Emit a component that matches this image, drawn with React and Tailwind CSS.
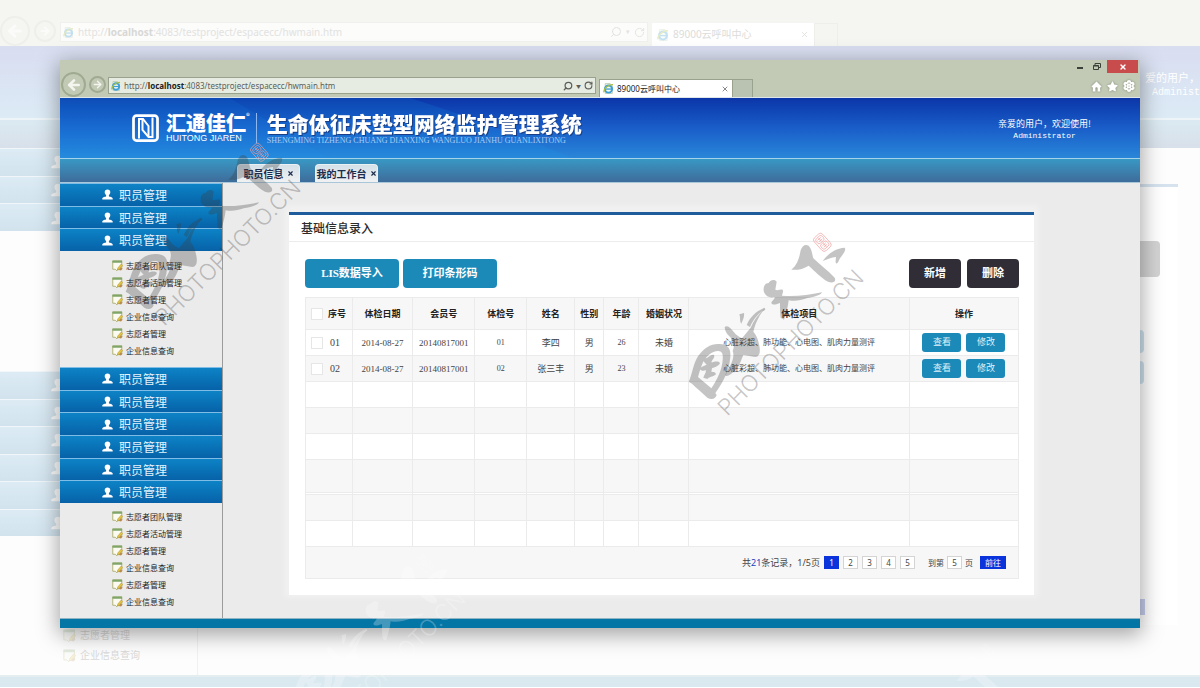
import React from "react";
import { Settings, Search, RotateCw, ArrowLeft, ArrowRight, X } from "lucide-react";
import { FaStar } from "react-icons/fa";

const SUB_ITEMS = ["志愿者团队管理", "志愿者活动管理", "志愿者管理", "企业信息查询", "志愿者管理", "企业信息查询"];

const COLUMNS = [
  { label: "序号", width: "w-[47px]" },
  { label: "体检日期", width: "w-[60px]" },
  { label: "会员号", width: "w-[62px]" },
  { label: "体检号", width: "w-[52px]" },
  { label: "姓名", width: "w-[48px]" },
  { label: "性别", width: "w-[29px]" },
  { label: "年龄", width: "w-[35px]" },
  { label: "婚姻状况", width: "w-[50px]" },
  { label: "体检项目", width: "w-[220px]" },
  { label: "操作", width: "w-[109px]" },
];

const PEOPLE = [
  { id: "01", date: "2014-08-27", member: "20140817001", exam: "01", name: "李四", sex: "男", age: "26", marital: "未婚" },
  { id: "02", date: "2014-08-27", member: "20140817001", exam: "02", name: "张三丰", sex: "男", age: "23", marital: "未婚" },
];

const EMPTY_ROWS = [
  "h-[26px] bg-white",
  "h-[26px] bg-[#f7f7f7]",
  "h-[26px] bg-white",
  "h-[33px] bg-[#f7f7f7]",
  "h-[2px] bg-white",
  "h-[26px] bg-[#f7f7f7]",
  "h-[26px] bg-white",
];

function BrowserIcon({ className }) {
  return (
    <svg viewBox="0 0 20 20" className={className} aria-hidden="true">
      <path d="M4 1h9l4 4v14H4z" fill="#f4f8ee" stroke="#9db58c" strokeWidth="1" />
      <circle cx="10" cy="11" r="6.500" fill="none" stroke="#3f9fd8" strokeWidth="3.600" />
      <path d="M5 11h11" stroke="#3f9fd8" strokeWidth="2.400" />
      <path d="M2 17C0 12 9 2 18 3" fill="none" stroke="#a9bf3c" strokeWidth="2.400" />
    </svg>
  );
}

function PersonIcon({ className }) {
  return (
    <svg viewBox="0 0 22 22" className={className} fill="currentColor" aria-hidden="true">
      <path d="M11 1c3.600 0 5.600 2.300 5.600 5.400 0 2.500-1.200 4.300-2.800 5.600v2.400c.6 1.200 7.600 1.600 7.600 4.600v2H.6v-2c0-3 7-3.400 7.600-4.600V12C6.600 10.700 5.400 8.900 5.400 6.400 5.400 3.300 7.400 1 11 1z" />
    </svg>
  );
}

function NoteIcon({ className }) {
  return (
    <svg viewBox="0 0 22 22" className={className} aria-hidden="true">
      <path d="M1.500 2v16.500h5l3 3 2.500-3h7.500V2z" fill="#fbfbf2" stroke="#a3a55c" strokeWidth="1.600" />
      <path d="M.8 1h19.400v4.500H.8z" fill="#7fa668" />
      <path d="M18.500 8l3 3-7 8-4 1 1-4z" fill="#e3c63c" stroke="#a98a35" strokeWidth="1" />
      <path d="M17 15l4 2-3 4-4-1z" fill="#b98a4e" />
    </svg>
  );
}

function HomeIcon({ className }) {
  return (
    <svg viewBox="0 0 24 24" className={className} fill="currentColor" aria-hidden="true">
      <path d="M12 1 1 12l2.500 2L4 13.500V23h5.500v-7a2.500 2.500 0 0 1 5 0v7H20v-9.500l.5.5 2.500-2z" />
    </svg>
  );
}

function LogoMark() {
  return (
    <svg viewBox="0 0 54 56" className="h-[28px] w-[27px] shrink-0" aria-hidden="true">
      <rect x="3" y="3" width="48" height="50" rx="6" fill="none" stroke="#fff" strokeWidth="5.500" />
      <path d="M14 49V10h8l11 14v20" fill="none" stroke="#fff" strokeWidth="4" />
      <path d="M41 7v39h-8L21 32V12" fill="none" stroke="#fff" strokeWidth="4" />
    </svg>
  );
}

function Watermark({ className, tinted = true, caption = true }) {
  return (
    <svg viewBox="0 0 600 600" className={className} fill="currentColor" aria-hidden="true">
      <path d="M26 470C36 452 38 420 54 394 72 366 100 352 126 358c24 4 28 22 24 46-4 34-22 70-44 100l4 6c-4 14-18 14-28 8-16-16-34-30-46-42zM54 456l40 34c18-26 32-56 34-84 2-20-2-28-14-28-18 0-36 16-46 36-6 14-10 28-14 42zM72 400c10 4 20-14 30-10 4 8-6 14-8 22 10-2 20-6 26 2-4 10-16 12-24 16l-2 10c8 0 14 2 14 8-8 8-18 6-26 14l-12-4c2-8 8-14 8-22-8 2-16 2-18-4 4-8 14-8 20-14-6-4-12-10-8-18z" />
      <path d="M134 306c8-8 20 4 28 16 6 8 16 14 24 18l26-32c10-24 24-42 44-58-22 24-30 48-36 70 8 10 14 20 18 42 4 22 0 32-12 34l-36-6c-8 18-14 40-30 52-6 4-16 14-24 10 2-14 14-26 20-42 4-10 6-24 2-32 8-22 2-32-10-44-8-8-14-18-14-28z" />
      <path d="M178 268l14-4c2 12-4 22-8 32-6-8-2-18-6-28zM200 300c10-24 28-42 54-52l2 6c-24 12-36 30-46 52z" />
      <path d="M252 202c-4-18 4-28 14-28 2-8 18-14 24-4l-4 24c8 4 14-2 22 0 4 6-2 12-2 18 38 4 78-2 120-10-4 10-28 14-46 18-18 6-34 10-54 6-2 20-8 40-14 58l-10-6c-2-16-2-30-2-44-10 4-22 8-26 0 2-8 10-10 10-18-12 4-26 0-32-14z" />
      <path d="M362 76c4-14 14-20 24-14 10 10 10 26 14 38 20 20 44 36 64 58 6 12-6 18-20 12-22-12-40-32-58-48-16 10-34 14-52 12 18-14 24-36 28-58z" />
      <path d="M428 108c16-20 34-38 66-40 6 8-6 20-14 32-4 6-4 12-10 16-6-4-2-12-2-20-14 0-26 8-40 12z" />
      <g transform="rotate(-42 427 52)" fill="none" stroke={tinted ? "#f0a0a0" : "currentColor"} strokeWidth="2">
        <rect x="410" y="26" width="34" height="52" rx="9" />
        <rect x="415" y="32" width="24" height="18" rx="6" />
        <rect x="415" y="54" width="24" height="18" rx="6" />
        <path d="M420 38h14M420 44h14M427 34v14M420 60h14M420 66h14M427 56v14" />
      </g>
      {caption && (
        <text transform="translate(142 576) rotate(-45)" fontFamily="Inter, sans-serif" fontWeight="300" fontSize="68">
          PHOTOPHOTO.CN
        </text>
      )}
    </svg>
  );
}

function Backdrop() {
  const rows = (n, from) =>
    Array.from({ length: n }, (_, i) => (
      <div
        key={from + i}
        className="flex flex-1 items-center border-t border-[#f0f6fa] bg-linear-to-b from-[#dcebf4] to-[#d2e3ee] pl-[51px] text-white"
      >
        <PersonIcon className="size-[14px]" />
      </div>
    ));
  return (
    <div aria-hidden="true" className="pointer-events-none absolute inset-0 flex flex-col overflow-hidden bg-[#fdfdfd]">
      <div className="flex h-[46px] shrink-0 items-end bg-[#f5f5f2]">
        <div className="flex h-[31px] items-center gap-[4px] pr-[4px]">
          <span className="flex size-[30px] items-center justify-center rounded-full border-2 border-[#eeeeea] text-[#fbfbfa]">
            <ArrowLeft className="size-[18px]" strokeWidth={4} />
          </span>
          <span className="flex size-[22px] items-center justify-center rounded-full border-2 border-[#eeeeea] text-[#fbfbfa]">
            <ArrowRight className="size-[12px]" strokeWidth={4} />
          </span>
        </div>
        <div className="mb-[4px] flex h-[20px] w-[49%] items-center gap-[4px] border border-[#f0f0ee] bg-[#fcfcfb] px-[2px] font-['Noto_Sans',sans-serif] text-[10px] text-[#e2e2df]">
          <BrowserIcon className="size-[11px] opacity-30" />
          <span className="flex-1">
            http://<b className="text-[#d8d8d6]">localhost</b>:4083/testproject/espacecc/hwmain.htm
          </span>
          <Search className="size-[12px] -scale-x-100" />
          <span className="text-[7px]">▾</span>
          <RotateCw className="size-[11px]" />
        </div>
        <div className="ml-[4px] flex h-[23px] w-[162px] items-center gap-[4px] bg-white px-[5px] font-['Noto_Sans','Noto_Sans_CJK_SC',sans-serif] text-[10px] text-[#dcdcda]">
          <BrowserIcon className="size-[12px] opacity-30" />
          <span className="flex-1">89000云呼叫中心</span>
          <X className="size-[9px]" />
        </div>
        <div className="h-[23px] w-[24px] border border-b-0 border-[#eeeeeb]" />
      </div>
      <div className="flex h-[72px] shrink-0 flex-col items-end bg-linear-to-b from-[#d9ddf0] to-[#dcebf6] pt-[24px] font-['Noto_Sans_CJK_SC',sans-serif] text-[11px] leading-[15px] text-white">
        <span>爱的用户，</span>
        <span className="font-['Liberation_Mono',monospace] text-[10px]">Administ</span>
      </div>
      <div className="h-[30px] shrink-0 border-t-2 border-[#edf5f9] bg-linear-to-b from-[#dbeaf2] to-[#d8e0ea]" />
      <div className="flex flex-1">
        <div className="flex w-[198px] flex-col border-r border-[#f1f1f1]">
          <div className="flex h-[83px] flex-col">{rows(3, 0)}</div>
          <div className="h-[140px]" />
          <div className="flex h-[165px] flex-col">{rows(6, 3)}</div>
          <div className="mt-auto mb-[13px] flex flex-col gap-[6px] pl-[63px] font-['Noto_Sans_CJK_SC',sans-serif] text-[10px] leading-[14px] text-[#d9d9d9]">
            {["志愿者管理", "企业信息查询"].map((t) => (
              <span key={t} className="flex items-center gap-[4px]">
                <NoteIcon className="size-[13px] opacity-20" />
                {t}
              </span>
            ))}
          </div>
        </div>
        <div className="mt-[36px] mr-[22px] mb-[50px] ml-[80px] flex flex-1 flex-col items-end border-t-3 border-[#d6e3ef] bg-white pt-[54px]">
          <div className="mr-[18px] h-[36px] w-[63px] rounded bg-[#d3d3d4]" />
          <div className="mt-[53px] mr-[34px] h-[23px] w-[48px] rounded-sm bg-[#cde2ee]" />
          <div className="mt-[8px] mr-[34px] h-[23px] w-[48px] rounded-sm bg-[#cde2ee]" />
          <div className="mt-auto mr-[33px] mb-[10px] h-[16px] w-[32px] bg-[#c6cdec]" />
        </div>
      </div>
      <div className="h-[12px] shrink-0 border-t-2 border-[#e4edf0] bg-[#d9e9ef]" />
      <div className="h-px shrink-0 bg-white" />
    </div>
  );
}

function BrowserChrome() {
  return (
    <div className="flex h-[38px] justify-between border-b border-[#dfe6ea] bg-[#c2cab5]">
      <div className="flex min-w-0 flex-1 items-end">
        <div className="flex shrink-0 items-center gap-[3px] overflow-hidden pr-[2px] pl-px text-[#f3f5ee]">
          <button type="button" aria-label="后退" className="flex size-[25px] items-center justify-center rounded-full border-2 border-[#a0aa92]">
            <ArrowLeft className="size-[16px]" strokeWidth={4} />
          </button>
          <button type="button" aria-label="前进" className="flex size-[17px] items-center justify-center rounded-full border-2 border-[#a0aa92]">
            <ArrowRight className="size-[11px]" strokeWidth={3} />
          </button>
        </div>
        <div className="mb-[3px] flex h-[17px] w-[488px] items-center gap-[3px] border border-[#98a28c] bg-[#e7ece3] px-[2px] text-[#5c5f59]">
          <BrowserIcon className="size-[10px] shrink-0" />
          <div
            role="textbox"
            aria-label="地址"
            contentEditable
            suppressContentEditableWarning
            className="flex-1 font-['Noto_Sans',sans-serif] text-[8px] leading-[12px] whitespace-nowrap text-[#5c5f59] outline-none"
          >
            http://<b className="text-[#222]">localhost</b>:4083/testproject/espacecc/hwmain.htm
          </div>
          <button type="button" aria-label="搜索"><Search className="size-[10px] -scale-x-100" strokeWidth={3} /></button>
          <span className="text-[5px] leading-none">▼</span>
          <button type="button" aria-label="刷新"><RotateCw className="size-[9px]" strokeWidth={3} /></button>
        </div>
        <div className="ml-[3px] flex h-[18px] w-[134px] shrink-0 items-center gap-[3px] border border-b-0 border-[#98a28c] bg-white px-[3px]">
          <BrowserIcon className="size-[11px]" />
          <span className="flex-1 font-['Noto_Sans','Noto_Sans_CJK_SC',sans-serif] text-[8px] leading-[12px] text-[#222]">89000云呼叫中心</span>
          <button type="button" aria-label="关闭标签" className="text-[#888]"><X className="size-[8px]" strokeWidth={3} /></button>
        </div>
        <button type="button" aria-label="新标签" className="h-[18px] w-[20px] shrink-0 border border-b-0 border-l-0 border-[#98a28c] bg-[#bac2b1]" />
      </div>
      <div className="flex shrink-0 flex-col items-end justify-between pr-[2px]">
        <div className="flex items-center">
          <button type="button" aria-label="最小化" className="flex h-[13px] w-[16px] items-end justify-center pb-[4px]">
            <span className="h-[2px] w-[6px] bg-[#3c4038]" />
          </button>
          <button type="button" aria-label="还原" className="mr-px flex h-[13px] w-[18px] items-center justify-center">
            <svg viewBox="0 0 16 14" className="h-[7px] w-[8px]" fill="none" stroke="#3c4038" strokeWidth="2">
              <path d="M1 5h10v8H1zM4 5V1h11v8h-4M1 6h10" />
            </svg>
          </button>
          <button type="button" aria-label="关闭" className="flex h-[13px] w-[31px] items-center justify-center bg-[#c94c4c] text-white">
            <X className="size-[8px]" strokeWidth={4} />
          </button>
        </div>
        <div className="mb-[5px] flex gap-[5px] pr-[3px] text-white drop-shadow-[0_0_1px_#7c8472]">
          <button type="button" aria-label="主页"><HomeIcon className="size-[11px]" /></button>
          <button type="button" aria-label="收藏"><FaStar className="size-[11px]" /></button>
          <button type="button" aria-label="设置"><Settings className="size-[12px]" strokeWidth={4} /></button>
        </div>
      </div>
    </div>
  );
}

function Header() {
  return (
    <header className="relative flex h-[60px] items-center justify-between overflow-hidden bg-linear-to-b from-[#0c35a8] via-[#1a5dc9] to-[#2a86d8] pr-[49px] pl-[72px] font-['Noto_Sans_CJK_SC',sans-serif] text-white">
      <svg viewBox="0 0 1080 60" preserveAspectRatio="none" className="absolute inset-0 size-full" aria-hidden="true">
        <path d="M0 0H170L270 60H0z" fill="#16a0f0" fillOpacity=".22" />
        <path d="M170 0H350Q430 25 512 60H270z" fill="#16a0f0" fillOpacity=".14" />
      </svg>
      <div className="relative flex items-center">
        <LogoMark />
        <div className="ml-[7px]">
          <div className="flex text-[20px] leading-[21px] font-black">
            汇通佳仁<sup className="mt-[4px] text-[8px] leading-none font-normal">®</sup>
          </div>
          <div className="font-['Liberation_Sans',sans-serif] text-[9px] leading-[11px]">HUITONG JIAREN</div>
        </div>
        <div className="mr-[10px] ml-[6px] h-[30px] w-px bg-[#8fb9ee]" />
        <div>
          <h1 className="text-[21px] leading-[25px] font-black whitespace-nowrap drop-shadow-[1px_1px_0_#1a3f86]">生命体征床垫型网络监护管理系统</h1>
          <div className="font-['Liberation_Serif',serif] text-[8px] leading-[9px] whitespace-nowrap text-[#a9cdf3]">
            SHENGMING TIZHENG CHUANG DIANXING WANGLUO JIANHU GUANLIXITONG
          </div>
        </div>
      </div>
      <div className="relative pt-[3px] text-center text-[9px] leading-[12px]">
        <div>亲爱的用户，欢迎使用!</div>
        <div className="font-['Liberation_Mono',monospace] text-[8px]">Administrator</div>
      </div>
    </header>
  );
}

function PageTab({ label }) {
  return (
    <button
      type="button"
      className="flex h-[18px] w-[63px] items-center justify-center gap-[3px] rounded-t-[4px] border border-b-0 border-[#e9f1f5] bg-linear-to-b from-[#d5e0e8] to-[#f0f1f2] font-['Noto_Sans_CJK_SC',sans-serif] text-[10px] leading-none font-bold whitespace-nowrap text-[#1b2c4d]"
    >
      {label}
      <X className="size-[7px] shrink-0" strokeWidth={4} />
    </button>
  );
}

function MenuButton() {
  return (
    <button
      type="button"
      className="flex flex-1 items-center gap-[6px] border-t border-[#7fbde6] bg-linear-to-b from-[#0d83c6] to-[#0762a8] pl-[42px] text-[12px] leading-[16px] text-[#e3f2fc]"
    >
      <PersonIcon className="size-[11px] text-white" />
      职员管理
    </button>
  );
}

function SubMenu({ className }) {
  return (
    <ul className={className}>
      {SUB_ITEMS.map((t, i) => (
        <li key={i}>
          <a href="#" className="flex h-[17px] items-center gap-[3px] pl-[52px] text-[8px] leading-none text-[#222]">
            <NoteIcon className="size-[11px]" />
            {t}
          </a>
        </li>
      ))}
    </ul>
  );
}

function Sidebar() {
  return (
    <nav className="w-[163px] shrink-0 border-r border-[#9b9b9b] font-['Noto_Sans_CJK_SC',sans-serif]">
      <div className="flex h-[68px] flex-col">{[0, 1, 2].map((i) => <MenuButton key={i} />)}</div>
      <SubMenu className="h-[116px] pt-[6px]" />
      <div className="flex h-[136px] flex-col">{[0, 1, 2, 3, 4, 5].map((i) => <MenuButton key={i} />)}</div>
      <SubMenu className="h-[115px] pt-[5px]" />
    </nav>
  );
}

const CELL = "border border-[#ebebeb] p-0";
const CHECK = "size-[12px] shrink-0 appearance-none border border-[#e6e6e6] bg-white checked:bg-[#1c8ab9]";

function RowButton({ children }) {
  return (
    <button type="button" className="h-[19px] w-[39px] rounded-[3px] bg-[#1c8ab9] text-[9px] leading-none text-[#dff1fa]">
      {children}
    </button>
  );
}

function DataTable() {
  return (
    <table className="w-full table-fixed border-collapse text-center font-['Liberation_Serif','Noto_Sans_CJK_SC',serif] text-[9px] leading-[12px] text-[#444]">
      <colgroup>
        {COLUMNS.map((c) => (
          <col key={c.label} className={c.width} />
        ))}
      </colgroup>
      <thead>
        <tr className="h-[32px] bg-[#f7f7f7] text-[#222]">
          {COLUMNS.map((c, i) => (
            <th key={c.label} className={CELL + " font-bold whitespace-nowrap"}>
              {i === 0 ? (
                <label className="flex items-center gap-[5px] pl-[5px]">
                  <input type="checkbox" className={CHECK} />
                  {c.label}
                </label>
              ) : (
                c.label
              )}
            </th>
          ))}
        </tr>
      </thead>
      <tbody>
        {PEOPLE.map((p, i) => (
          <tr key={p.id} className={i % 2 ? "h-[26px] bg-[#f7f7f7]" : "h-[26px] bg-white"}>
            <td className={CELL}>
              <label className="flex items-center gap-[7px] pl-[5px] text-[10px]">
                <input type="checkbox" className={CHECK} />
                {p.id}
              </label>
            </td>
            <td className={CELL}>{p.date}</td>
            <td className={CELL}>{p.member}</td>
            <td className={CELL + " text-[8px]"}>{p.exam}</td>
            <td className={CELL}>{p.name}</td>
            <td className={CELL}>{p.sex}</td>
            <td className={CELL + " text-[8px]"}>{p.age}</td>
            <td className={CELL}>{p.marital}</td>
            <td className={CELL + " text-[8px]"}>心脏彩超、肺功能、心电图、肌肉力量测评</td>
            <td className={CELL}>
              <div className="flex justify-center gap-[5px]">
                <RowButton>查看</RowButton>
                <RowButton>修改</RowButton>
              </div>
            </td>
          </tr>
        ))}
        {EMPTY_ROWS.map((cls, i) => (
          <tr key={i} className={cls}>
            {COLUMNS.map((c) => (
              <td key={c.label} className={CELL} />
            ))}
          </tr>
        ))}
      </tbody>
      <tfoot>
        <tr className="h-[32px] bg-[#f7f7f7]">
          <td colSpan={COLUMNS.length} className={CELL}>
            <Pagination />
          </td>
        </tr>
      </tfoot>
    </table>
  );
}

function Pagination() {
  const box = "h-[13px] w-[15px] border border-[#d4d4d4] bg-white text-center text-[8px] leading-[11px]";
  return (
    <div className="flex items-center justify-end pr-[12px] font-['Noto_Sans','Noto_Sans_CJK_SC',sans-serif] text-[9px]">
      <span className="mr-[4px]">
        共<span className="text-[#2340c0]">21</span>条记录，1/5页
      </span>
      <div className="flex gap-[4px]">
        <button type="button" className="h-[13px] w-[15px] bg-[#0a33dc] text-[8px] leading-[13px] text-white">1</button>
        {["2", "3", "4", "5"].map((n) => (
          <button key={n} type="button" className={box}>{n}</button>
        ))}
      </div>
      <label className="ml-[13px] flex items-center gap-[3px] text-[8px]">
        到第
        <input type="text" defaultValue="5" className={box} />
        页
      </label>
      <button type="button" className="ml-[7px] h-[13px] w-[26px] bg-[#0a33dc] text-[8px] leading-[13px] text-white">前往</button>
    </div>
  );
}

function Card() {
  const base = "h-[29px] rounded-[4px] text-[11px] leading-none font-bold text-white";
  return (
    <section className="mt-[29px] mr-[106px] mb-[23px] ml-[66px] min-w-0 flex-1 border-t-3 border-[#1f5c9b] bg-white shadow-[0_-2px_6px_5px_rgba(255,255,255,0.3)]">
      <h2 className="border-b border-[#ececec] pl-[12px] text-[12px] leading-[26px] font-medium text-[#2c2c2c]">基础信息录入</h2>
      <div className="pt-[17px] pr-[15px] pb-[16px] pl-[16px]">
        <div className="mb-[9px] flex justify-between font-['Liberation_Serif','Noto_Sans_CJK_SC',serif]">
          <div className="flex gap-[4px]">
            <button type="button" className={base + " w-[94px] bg-[#1c8ab9]"}>LIS数据导入</button>
            <button type="button" className={base + " w-[94px] bg-[#1c8ab9]"}>打印条形码</button>
          </div>
          <div className="flex gap-[6px]">
            <button type="button" className={base + " w-[52px] bg-[#302d36]"}>新增</button>
            <button type="button" className={base + " w-[52px] bg-[#302d36]"}>删除</button>
          </div>
        </div>
        <DataTable />
      </div>
    </section>
  );
}

export default function App() {
  return (
    <div className="relative min-h-screen overflow-hidden p-[60px] font-['Noto_Sans_CJK_SC',sans-serif]">
      <Backdrop />
      <div className="relative bg-[#ebebeb] shadow-[0_5px_20px_2px_rgba(0,0,0,0.35)]">
        <BrowserChrome />
        <Header />
        <div className="flex h-[25px] items-end gap-[15px] border-y border-t-[#a5d3ec] border-b-[#a9c7d9] bg-linear-to-b from-[#3898c4] to-[#3d6c9a] pl-[177px]">
          <PageTab label="职员信息" />
          <PageTab label="我的工作台" />
        </div>
        <div className="flex">
          <Sidebar />
          <main className="flex min-w-0 flex-1">
            <Card />
          </main>
        </div>
        <footer className="h-[10px] border-t border-[#8fb4c4] bg-[#0476a6]" />
      </div>
      <Watermark className="pointer-events-none absolute top-[225px] left-[680px] size-[200px] text-[#3c3c3c]/30" />
      <Watermark className="pointer-events-none absolute top-[135px] left-[117px] size-[200px] text-[#3c3c3c]/30" />
      <Watermark tinted={false} className="pointer-events-none absolute top-[546px] left-[282px] size-[200px] text-white/25" />
      <Watermark tinted={false} caption={false} className="pointer-events-none absolute top-[636px] left-[845px] size-[200px] text-white/25" />
    </div>
  );
}
